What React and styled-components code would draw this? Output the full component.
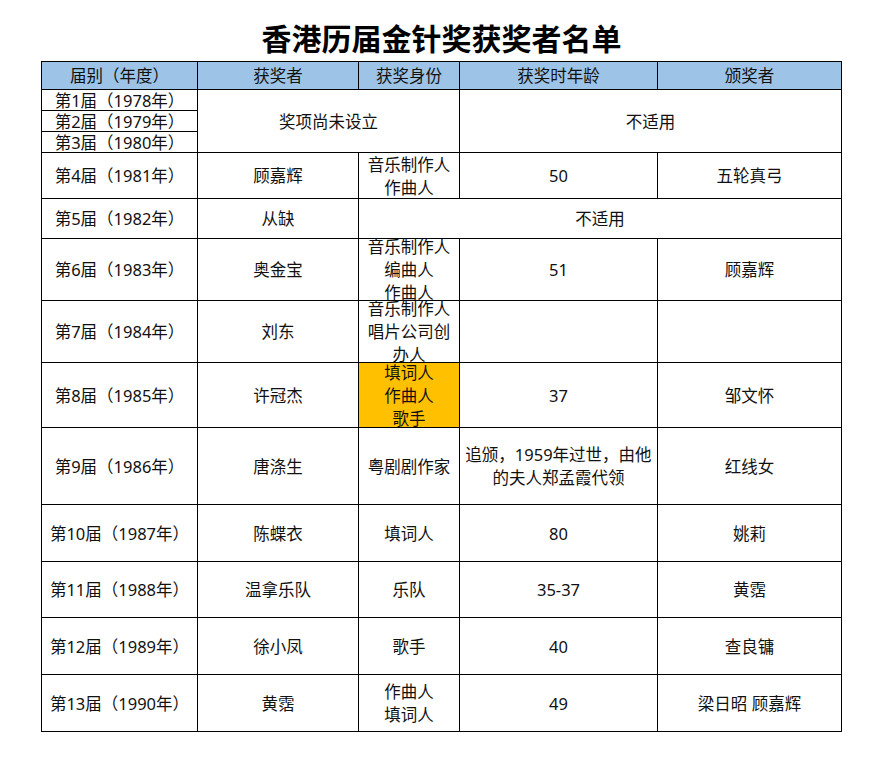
import React from "react";
import styled, { createGlobalStyle } from "styled-components";

const GlobalStyle = createGlobalStyle`
  html, body {
    margin: 0;
    padding: 0;
    background: #fff;
  }
  body {
    font-family: "Noto Sans", "Noto Sans CJK SC", sans-serif;
    color: #111;
  }
`;

const Page = styled.div`
  width: 801px;
  padding: 22px 0 0 41px;
`;

const Title = styled.h1`
  margin: 0 0 9px;
  height: 30px;
  font-family: "Noto Sans CJK SC", sans-serif;
  font-size: 30px;
  line-height: 30px;
  font-weight: 700;
  text-align: center;
  color: #000;
`;

const Sheet = styled.div`
  display: grid;
  grid-template-columns: 156px 161px 101px 198px 184px;
  grid-template-rows: 28px 21px 21px 21px 46px 40px 62px 62px 65px 77px 57px 56px 57px 57px;
  border-left: 1px solid #000;
  border-top: 1px solid #000;
  width: max-content;
`;

const Cell = styled.div`
  grid-column: span ${(p) => p.$span || 1};
  grid-row: span ${(p) => p.$rows || 1};
  box-sizing: border-box;
  border-right: 1px solid #000;
  border-bottom: 1px solid #000;
  background: ${(p) => (p.$head ? "#9dc3e6" : p.$mark ? "#ffc000" : "transparent")};
  display: flex;
  flex-direction: column;
  align-items: center;
  justify-content: center;
  padding: 0 3px;
  min-height: 0;
  overflow: visible;
  font-size: 16.5px;
  line-height: 23px;
  text-align: center;
  white-space: normal;
  word-break: break-all;
`;

const Line = styled.span`
  display: block;
  width: 100%;
`;

const head = ["届别（年度）", "获奖者", "获奖身份", "获奖时年龄", "颁奖者"];

const rows = [
  ["第1届（1978年）", { text: "奖项尚未设立", span: 2, rows: 3 }, { text: "不适用", span: 2, rows: 3 }],
  ["第2届（1979年）"],
  ["第3届（1980年）"],
  ["第4届（1981年）", "顾嘉辉", { lines: ["音乐制作人", "作曲人"] }, "50", "五轮真弓"],
  ["第5届（1982年）", "从缺", { text: "不适用", span: 3 }],
  ["第6届（1983年）", "奥金宝", { lines: ["音乐制作人", "编曲人", "作曲人"] }, "51", "顾嘉辉"],
  ["第7届（1984年）", "刘东", { lines: ["音乐制作人", "唱片公司创办人"] }, "", ""],
  ["第8届（1985年）", "许冠杰", { lines: ["填词人", "作曲人", "歌手"], mark: true }, "37", "邹文怀"],
  ["第9届（1986年）", "唐涤生", "粤剧剧作家", "追颁，1959年过世，由他的夫人郑孟霞代领", "红线女"],
  ["第10届（1987年）", "陈蝶衣", "填词人", "80", "姚莉"],
  ["第11届（1988年）", "温拿乐队", "乐队", "35-37", "黄霑"],
  ["第12届（1989年）", "徐小凤", "歌手", "40", "查良镛"],
  ["第13届（1990年）", "黄霑", { lines: ["作曲人", "填词人"] }, "49", "梁日昭 顾嘉辉"],
];

const renderCell = (c, key) => {
  if (typeof c === "string") return <Cell key={key}>{c}</Cell>;
  return (
    <Cell key={key} $span={c.span} $rows={c.rows} $mark={c.mark}>
      {c.lines ? c.lines.map((l, i) => <Line key={i}>{l}</Line>) : c.text}
    </Cell>
  );
};

export default function App() {
  return (
    <>
      <GlobalStyle />
      <Page>
        <Title>香港历届金针奖获奖者名单</Title>
        <Sheet>
          {head.map((h, i) => (
            <Cell key={"h" + i} $head>
              {h}
            </Cell>
          ))}
          {rows.map((r, ri) => r.map((c, ci) => renderCell(c, ri + "-" + ci)))}
        </Sheet>
      </Page>
    </>
  );
}
